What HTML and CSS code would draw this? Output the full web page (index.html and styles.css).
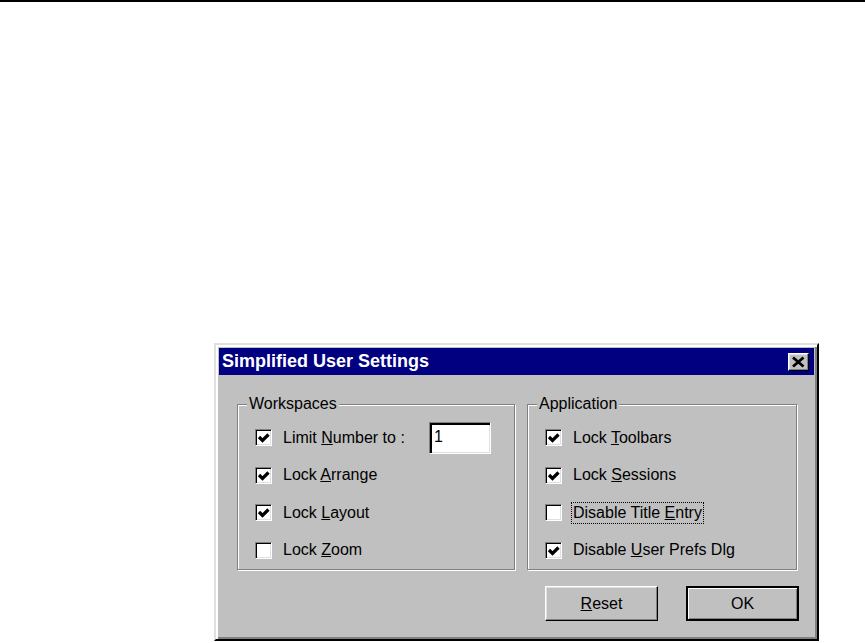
FILE: index.html
```html
<!DOCTYPE html>
<html lang="en">
<head>
    <meta charset="UTF-8">
    <title>Simplified User Settings</title>
    <link rel="stylesheet" href="styles.css">
</head>
<body>
    <div class="page-rule"></div>
    <div class="dialog">
        <div class="titlebar">
            <span class="title">Simplified User Settings</span>
            <button type="button" class="close">
                <svg width="19" height="16" viewBox="0 0 19 16"><path d="M4 3.5 L14.5 12.5 M14.5 3.5 L4 12.5" stroke="#000" stroke-width="2.8" fill="none"/></svg>
            </button>
        </div>
        <div class="groups">
            <fieldset class="group group-ws">
                <legend>Workspaces</legend>
                <div class="row">
                    <span class="box"><svg width="15" height="15" viewBox="0 0 15 15"><polyline points="3,7 6.5,10.5 12.5,4.5" stroke="#000" stroke-width="3.2" fill="none"/></svg></span>
                    <span>Limit <u>N</u>umber to :</span>
                    <input class="num" type="text" value="1">
                </div>
                <div class="row">
                    <span class="box"><svg width="15" height="15" viewBox="0 0 15 15"><polyline points="3,7 6.5,10.5 12.5,4.5" stroke="#000" stroke-width="3.2" fill="none"/></svg></span>
                    <span>Lock <u>A</u>rrange</span>
                </div>
                <div class="row">
                    <span class="box"><svg width="15" height="15" viewBox="0 0 15 15"><polyline points="3,7 6.5,10.5 12.5,4.5" stroke="#000" stroke-width="3.2" fill="none"/></svg></span>
                    <span>Lock <u>L</u>ayout</span>
                </div>
                <div class="row">
                    <span class="box"></span>
                    <span>Lock <u>Z</u>oom</span>
                </div>
            </fieldset>
            <fieldset class="group group-app">
                <legend>Application</legend>
                <div class="row">
                    <span class="box"><svg width="15" height="15" viewBox="0 0 15 15"><polyline points="3,7 6.5,10.5 12.5,4.5" stroke="#000" stroke-width="3.2" fill="none"/></svg></span>
                    <span>Lock <u>T</u>oolbars</span>
                </div>
                <div class="row">
                    <span class="box"><svg width="15" height="15" viewBox="0 0 15 15"><polyline points="3,7 6.5,10.5 12.5,4.5" stroke="#000" stroke-width="3.2" fill="none"/></svg></span>
                    <span>Lock <u>S</u>essions</span>
                </div>
                <div class="row">
                    <span class="box"></span>
                    <span class="focus">Disable Title <u>E</u>ntry</span>
                </div>
                <div class="row">
                    <span class="box"><svg width="15" height="15" viewBox="0 0 15 15"><polyline points="3,7 6.5,10.5 12.5,4.5" stroke="#000" stroke-width="3.2" fill="none"/></svg></span>
                    <span>Disable <u>U</u>ser Prefs Dlg</span>
                </div>
            </fieldset>
        </div>
        <div class="actions">
            <button type="button" class="btn"><u>R</u>eset</button>
            <button type="button" class="btn btn-default">OK</button>
        </div>
    </div>
</body>
</html>
```

FILE: styles.css
```css
* {
    box-sizing: border-box;
}

body {
    margin: 0;
    background-color: #fff;
    font-family: "Liberation Sans", Arial, sans-serif;
    font-size: 16px;
    color: #000;
}

.page-rule {
    height: 2px;
    background-color: #000;
}

.dialog {
    width: 605px;
    margin: 341px 0 0 214px;
    padding: 3px 3px 18px;
    background-color: #c0c0c0;
    border: 2px solid;
    border-color: #dfdfdf #000 #000 #dfdfdf;
    box-shadow: inset 2px 2px #fff, inset -2px -2px #808080;
}

.titlebar {
    display: flex;
    align-items: center;
    height: 27px;
    padding: 0 5px 0 3px;
    background-color: #000080;
    color: #fff;
}

.title {
    flex: 1;
    font-size: 18px;
    font-weight: bold;
}

.close {
    display: flex;
    width: 21px;
    height: 18px;
    padding: 0;
    background-color: #c0c0c0;
    border: 1px solid;
    border-color: #fff #000 #000 #fff;
    box-shadow: inset -1px -1px #808080, inset 1px 1px #dfdfdf;
}

.close svg {
    display: block;
}

.groups {
    display: flex;
    gap: 12px;
    margin: 21px 0 0 18px;
}

.group {
    margin: 0;
    padding: 7px 0 0;
    min-width: 0;
    border: 1px solid #808080;
    box-shadow: inset 1px 1px #fff, 1px 1px #fff;
}

.group-ws {
    width: 278px;
}

.group-app {
    width: 270px;
}

.group legend {
    margin-left: 9px;
    padding: 0 2px;
    line-height: 16px;
    background-color: #c0c0c0;
}

.row {
    display: flex;
    align-items: center;
    height: 37.5px;
    padding: 0 23px 0 17px;
}

.box {
    flex: none;
    width: 17px;
    height: 17px;
    margin-right: 11px;
    background-color: #fff;
    border: 1px solid;
    border-color: #808080 #fff #fff #808080;
    box-shadow: inset 1px 1px #000, inset -1px -1px #dfdfdf;
}

.box svg {
    display: block;
}

.num {
    margin-left: auto;
    width: 62px;
    height: 32px;
    padding: 0 0 2px 4px;
    font: inherit;
    color: #000;
    background-color: #fff;
    border: 1px solid;
    border-color: #808080 #fff #fff #808080;
    box-shadow: inset 2px 2px #000, inset -1px -1px #dfdfdf;
    outline: none;
}

.focus {
    display: inline-block;
    margin-left: -1px;
    padding: 0 1px;
    line-height: 20px;
    outline: 1px dotted #000;
}

.actions {
    display: flex;
    justify-content: flex-end;
    gap: 28px;
    margin-top: 16px;
    padding-right: 15px;
}

.btn {
    width: 113px;
    height: 35px;
    padding: 0;
    font: inherit;
    color: #000;
    background-color: #c0c0c0;
    border: 1px solid;
    border-color: #fff #000 #000 #fff;
    box-shadow: inset -1px -1px #808080, inset 1px 1px #dfdfdf;
}

.btn-default {
    border: 2px solid #000;
    box-shadow: inset 1px 1px #fff, inset -1px -1px #808080;
}
```
